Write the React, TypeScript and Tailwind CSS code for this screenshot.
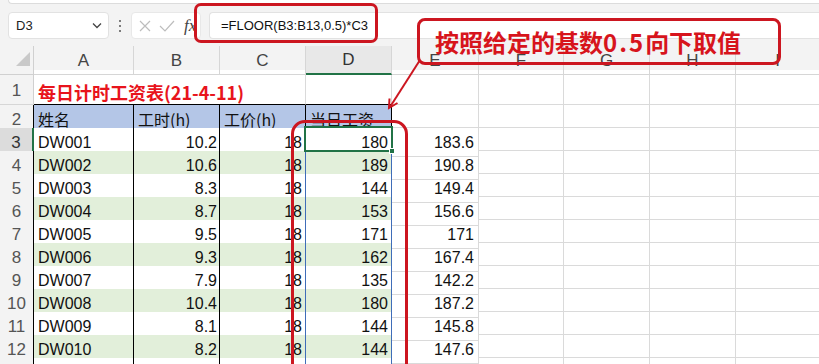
import React from 'react'

// 工作表截图：FLOOR 公式示例
const COLS = 'grid grid-cols-[34px_100px_86px_86px_86px_87px_85px_86px_86px_84px]'
const FONT = "font-['Liberation_Sans','Noto_Sans_CJK_SC',sans-serif]"
const CJK = "font-['Noto_Sans_CJK_SC',sans-serif]"

const rows: [string, string, string, string][] = [
    ['DW001', '10.2', '180', '183.6'],
    ['DW002', '10.6', '189', '190.8'],
    ['DW003', '8.3', '144', '149.4'],
    ['DW004', '8.7', '153', '156.6'],
    ['DW005', '9.5', '171', '171'],
    ['DW006', '9.3', '162', '167.4'],
    ['DW007', '7.9', '135', '142.2'],
    ['DW008', '10.4', '180', '187.2'],
    ['DW009', '8.1', '144', '145.8'],
    ['DW010', '8.2', '144', '147.6'],
    ['', '', '', ''],
]

function Blank({ h }: { h: string }) {
    return <div className={`${h} border-r border-b border-[#dadada]`} />
}

function FormulaBar() {
    return (
        <div className="h-[41px] bg-[#f3f3f3] flex items-center">
            <div className="ml-[8px] w-[101px] h-[27px] bg-white border border-[#e2e2e2] rounded-[4px] flex items-center justify-between pl-[7px] pr-[6px]">
                <span className="text-[13px] text-[#222] font-['Liberation_Sans',sans-serif]">D3</span>
                <svg width="10" height="7" viewBox="0 0 10 7">
                    <path d="M1 1.5 L5 5.5 L9 1.5" stroke="#444" strokeWidth="1.3" fill="none" />
                </svg>
            </div>
            <div className="w-[22px] flex flex-col items-center gap-[3px]">
                <div className="w-[2px] h-[2px] bg-[#555] rounded-full" />
                <div className="w-[2px] h-[2px] bg-[#555] rounded-full" />
                <div className="w-[2px] h-[2px] bg-[#555] rounded-full" />
            </div>
            <div className="w-[70px] h-[27px] bg-white border border-[#e8e8e8] rounded-[4px] flex items-center pl-[6px]">
                <svg width="14" height="14" viewBox="0 0 14 14">
                    <path d="M2 2 L12 12 M12 2 L2 12" stroke="#bdbdbd" strokeWidth="1.2" />
                </svg>
                <svg width="18" height="14" viewBox="0 0 18 14" className="ml-[6px]">
                    <path d="M2 7 L7 12 L16 2" stroke="#bdbdbd" strokeWidth="1.2" fill="none" />
                </svg>
                <span className="ml-[8px] text-[17px] italic text-[#444] font-['Liberation_Serif',serif] leading-none">fx</span>
            </div>
            <div className="ml-[8px] flex-1 h-[27px] bg-white border-y border-l border-[#e2e2e2] rounded-l-[4px] flex items-center pl-[11px]">
                <span className="text-[13px] text-[#111] font-['Liberation_Sans',sans-serif]">=FLOOR(B3:B13,0.5)*C3</span>
            </div>
        </div>
    )
}

function ColumnHeaders() {
    const letters = ['A', 'B', 'C', 'D', 'E', 'F', 'G', 'H', 'I']
    return (
        <div className={`${COLS} h-[24px] bg-[#f3f3f3] relative z-20`}>
            <div className="border-r border-b border-[#d0d0d0] relative">
                <svg width="34" height="24" viewBox="0 0 34 24" className="absolute left-0 top-0">
                    <polygon points="30,6 30,20 16,20" fill="#c9c9c9" />
                </svg>
            </div>
            {letters.map((l) => (
                <div
                    key={l}
                    className={
                        l === 'D'
                            ? 'border-r border-[#d6d6d6] border-b-2 border-b-[#217346] bg-[#e8e8e8] flex items-center justify-center pt-[1px] text-[17px] text-[#333]'
                            : 'border-r border-b border-[#d6d6d6] flex items-center justify-center pt-[1px] text-[17px] text-[#444]'
                    }
                >
                    {l}
                </div>
            ))}
        </div>
    )
}

function RowHead({ n, selected, table }: { n: number; selected?: boolean; table?: boolean }) {
    return (
        <div
            className={
                selected
                    ? 'bg-[#dcdcdc] border-b border-[#d6d6d6] border-r-2 border-r-[#217346] flex items-center justify-center pt-[2px] text-[17px] text-[#333]'
                    : table
                      ? 'bg-[#f3f3f3] border-b border-[#d6d6d6] border-r border-r-black flex items-center justify-center pt-[2px] text-[17px] text-[#555]'
                      : 'bg-[#f3f3f3] border-b border-[#d6d6d6] border-r border-r-[#d0d0d0] flex items-end justify-center pb-[1px] text-[17px] text-[#555]'
            }
        >
            {n}
        </div>
    )
}

function TitleRow() {
    return (
        <div className={`${COLS} h-[35px]`}>
            <RowHead n={1} />
            <div className="border-b border-black flex items-end pl-[4px] pb-[1px] overflow-visible relative z-10">
                <span className={`whitespace-nowrap text-[18px] font-bold text-[#e8141c] ${CJK} leading-[22px]`}>
                    每日计时工资表(21-4-11)
                </span>
            </div>
            <div className="border-b border-black" />
            <div className="border-b border-r border-black border-r-[#dadada]" />
            <div className="border-b border-r border-black border-r-[#dadada]" />
            <Blank h="h-[35px]" />
            <Blank h="h-[35px]" />
            <Blank h="h-[35px]" />
            <Blank h="h-[35px]" />
            <Blank h="h-[35px]" />
        </div>
    )
}

function HeaderRow() {
    const cls = `bg-[#b4c6e7] border-r border-b border-black flex items-center pt-[1px] pl-[4px] text-[16px] text-[#111] ${CJK}`
    return (
        <div className={`${COLS} h-[23px]`}>
            <RowHead n={2} table />
            <div className={cls}>姓名</div>
            <div className={cls}>工时(h)</div>
            <div className={cls}>工价(h)</div>
            <div className={cls}>当日工资</div>
            <Blank h="h-[23px]" />
            <Blank h="h-[23px]" />
            <Blank h="h-[23px]" />
            <Blank h="h-[23px]" />
            <Blank h="h-[23px]" />
        </div>
    )
}

function DataRow({ r, n }: { r: [string, string, string, string]; n: number }) {
    const green = n % 2 === 0
    const fill = green ? 'bg-[#e2efda]' : 'bg-white'
    const empty = r[0] === ''
    return (
        <div className={`${COLS} h-[23px] text-[16px] text-[#111]`}>
            <RowHead n={n} table selected={n === 3} />
            <div className={`${fill} border-r border-b border-black flex items-center pt-[2px] pl-[4px]`}>{r[0]}</div>
            <div className={`${fill} border-r border-b border-black flex items-center pt-[2px] justify-end pr-[2px]`}>{r[1]}</div>
            <div className={`${fill} border-b border-black border-r border-r-[#3f6db8] flex items-center pt-[2px] justify-end pr-[3px]`}>
                {empty ? '' : '18'}
            </div>
            <div className={`${fill} border-b border-black border-r border-r-[#3f6db8] flex items-center pt-[2px] justify-end pr-[3px]`}>{r[2]}</div>
            <div className="border-r border-b border-[#dadada] flex items-center pt-[2px] justify-end pr-[4px]">{r[3]}</div>
            <Blank h="h-[23px]" />
            <Blank h="h-[23px]" />
            <Blank h="h-[23px]" />
            <Blank h="h-[23px]" />
        </div>
    )
}

export default function App() {
    return (
        <div className={`w-[819px] h-[364px] overflow-hidden relative bg-white ${FONT}`}>
            <div className="h-[5px] bg-[#f3f3f3]">
                <div className="ml-[8px] h-[4px] bg-white border-b border-l border-[#dcdcdc] rounded-bl-[6px]" />
            </div>
            <FormulaBar />
            <ColumnHeaders />
            <TitleRow />
            <HeaderRow />
            {rows.map((r, i) => (
                <DataRow key={i} r={r} n={i + 3} />
            ))}

            {/* 选中单元格 D3 */}
            <div className="absolute left-[304px] top-[126px] w-[89px] h-[26px] border-2 border-[#217346] pointer-events-none" />
            <div className="absolute left-[389px] top-[148px] w-[6px] h-[6px] bg-[#217346] border border-white" />

            {/* 公式框标注 */}
            <div className="absolute left-[194px] top-[3px] w-[184px] h-[40px] border-[3px] border-[#cc1620] rounded-[7px] pointer-events-none z-30" />

            {/* D列标注 */}
            <div className="absolute left-[291px] top-[120px] w-[117px] h-[300px] border-[3px] border-[#cc1620] rounded-[14px] pointer-events-none" />

            {/* 箭头 */}
            <svg width="819" height="364" className="absolute left-0 top-0 pointer-events-none z-30">
                <line x1="420" y1="60" x2="390" y2="107" stroke="#cc1620" strokeWidth="2" />
                <polyline points="389.5,98.5 389,108 397.5,103" stroke="#cc1620" strokeWidth="2" fill="none" />
            </svg>

            {/* 说明框：无底色，列标从框内透出 */}
            <div className="absolute left-[417px] top-[18px] w-[364px] h-[47px] border-[3px] border-[#cc1620] rounded-[8px] flex items-center pl-[15px] z-30 pointer-events-none">
                <span className={`text-[24px] font-bold text-[#d7141c] ${CJK} leading-none whitespace-nowrap`}>
                    按照给定的基数<span className="tracking-[2px]">0.5</span>向下取值
                </span>
            </div>
        </div>
    )
}
